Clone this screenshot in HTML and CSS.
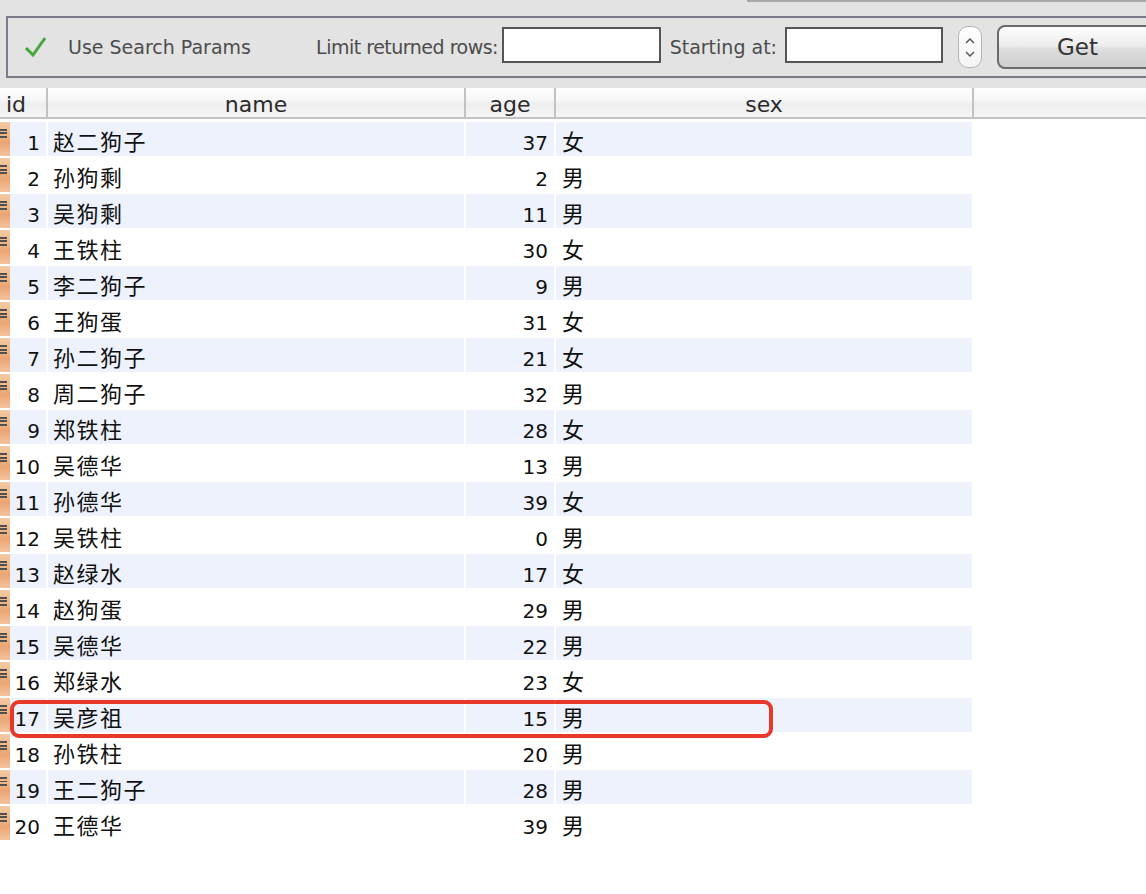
FILE: index.html
```html
<!DOCTYPE html>
<html>
<head>
<meta charset="utf-8">
<link rel="stylesheet" href="styles.css">
</head>
<body>
<div class="top">
  <div class="top-line"></div>
  <div class="toolbar">
    <svg class="check" width="22" height="22" viewBox="0 0 22 22"><path d="M2 12 L9 19 L21 2" fill="none" stroke="#45a83b" stroke-width="3" stroke-linejoin="miter"/></svg>
    <span class="opt">Use Search Params</span>
    <span class="lbl lbl1">Limit returned rows:</span>
    <span class="field f1"></span>
    <span class="lbl lbl2">Starting at:</span>
    <span class="field f2"></span>
    <span class="stepper"><svg width="20" height="40" viewBox="0 0 20 40"><path d="M6 16 L10 12 L14 16" fill="none" stroke="#555" stroke-width="1.5"/><path d="M6 25 L10 29 L14 25" fill="none" stroke="#555" stroke-width="1.5"/></svg></span>
    <span class="btn">Get</span>
  </div>
</div>
<div class="thead">
  <div class="th th-id">id</div>
  <div class="th th-name">name</div>
  <div class="th th-age">age</div>
  <div class="th th-sex">sex</div>
  <div class="th th-rest"></div>
</div>
<div class="rows">
  <div class="row alt"><span class="grip"></span><span class="c id">1</span><span class="c name">赵二狗子</span><span class="c age">37</span><span class="c sex">女</span></div>
  <div class="row"><span class="grip"></span><span class="c id">2</span><span class="c name">孙狗剩</span><span class="c age">2</span><span class="c sex">男</span></div>
  <div class="row alt"><span class="grip"></span><span class="c id">3</span><span class="c name">吴狗剩</span><span class="c age">11</span><span class="c sex">男</span></div>
  <div class="row"><span class="grip"></span><span class="c id">4</span><span class="c name">王铁柱</span><span class="c age">30</span><span class="c sex">女</span></div>
  <div class="row alt"><span class="grip"></span><span class="c id">5</span><span class="c name">李二狗子</span><span class="c age">9</span><span class="c sex">男</span></div>
  <div class="row"><span class="grip"></span><span class="c id">6</span><span class="c name">王狗蛋</span><span class="c age">31</span><span class="c sex">女</span></div>
  <div class="row alt"><span class="grip"></span><span class="c id">7</span><span class="c name">孙二狗子</span><span class="c age">21</span><span class="c sex">女</span></div>
  <div class="row"><span class="grip"></span><span class="c id">8</span><span class="c name">周二狗子</span><span class="c age">32</span><span class="c sex">男</span></div>
  <div class="row alt"><span class="grip"></span><span class="c id">9</span><span class="c name">郑铁柱</span><span class="c age">28</span><span class="c sex">女</span></div>
  <div class="row"><span class="grip"></span><span class="c id">10</span><span class="c name">吴德华</span><span class="c age">13</span><span class="c sex">男</span></div>
  <div class="row alt"><span class="grip"></span><span class="c id">11</span><span class="c name">孙德华</span><span class="c age">39</span><span class="c sex">女</span></div>
  <div class="row"><span class="grip"></span><span class="c id">12</span><span class="c name">吴铁柱</span><span class="c age">0</span><span class="c sex">男</span></div>
  <div class="row alt"><span class="grip"></span><span class="c id">13</span><span class="c name">赵绿水</span><span class="c age">17</span><span class="c sex">女</span></div>
  <div class="row"><span class="grip"></span><span class="c id">14</span><span class="c name">赵狗蛋</span><span class="c age">29</span><span class="c sex">男</span></div>
  <div class="row alt"><span class="grip"></span><span class="c id">15</span><span class="c name">吴德华</span><span class="c age">22</span><span class="c sex">男</span></div>
  <div class="row"><span class="grip"></span><span class="c id">16</span><span class="c name">郑绿水</span><span class="c age">23</span><span class="c sex">女</span></div>
  <div class="row alt marked"><span class="grip"></span><span class="c id">17</span><span class="c name">吴彦祖</span><span class="c age">15</span><span class="c sex">男</span><span class="hl"></span></div>
  <div class="row"><span class="grip"></span><span class="c id">18</span><span class="c name">孙铁柱</span><span class="c age">20</span><span class="c sex">男</span></div>
  <div class="row alt"><span class="grip"></span><span class="c id">19</span><span class="c name">王二狗子</span><span class="c age">28</span><span class="c sex">男</span></div>
  <div class="row"><span class="grip"></span><span class="c id">20</span><span class="c name">王德华</span><span class="c age">39</span><span class="c sex">男</span></div>
</div>
</body>
</html>
```
FILE: styles.css
```css
html, body {
  margin: 0;
  padding: 0;
}
body {
  width: 1146px;
  height: 894px;
  overflow: hidden;
  background: #ffffff;
  font-family: "DejaVu Sans", "Noto Sans CJK SC", sans-serif;
}
.top {
  background: #e3e3e3;
  height: 88px;
  overflow: hidden;
}
.top-line {
  height: 2px;
  margin-left: 747px;
  background: #a8a8a8;
}
.toolbar {
  margin-top: 14px;
  margin-left: 6px;
  height: 58px;
  width: 1300px;
  border: 2px solid #7b7b89;
  border-right: none;
  display: flex;
  align-items: center;
  font-size: 19px;
  color: #4c4c4c;
}
.check {
  margin-left: 16px;
  flex: none;
}
.opt {
  margin-left: 22px;
  width: 246px;
  flex: none;
  white-space: nowrap;
}
.lbl {
  flex: none;
  text-align: right;
  white-space: nowrap;
}
.lbl1 {
  width: 188px;
  padding-right: 4px;
  box-sizing: border-box;
  letter-spacing: -0.5px;
}
.lbl2 {
  width: 124px;
  padding-right: 8px;
  box-sizing: border-box;
}
.field {
  flex: none;
  height: 36px;
  background: #fff;
  border: 2px solid #555;
  box-sizing: border-box;
  margin-top: -4px;
}
.f1 { width: 159px; }
.f2 { width: 158px; }
.stepper {
  flex: none;
  margin-left: 15px;
  width: 24px;
  height: 42px;
  box-sizing: border-box;
  border: 1.5px solid #b4b4b4;
  border-radius: 10px;
  background: linear-gradient(#ffffff, #f4f4f4);
  display: flex;
  align-items: center;
  justify-content: center;
}
.btn {
  flex: none;
  margin-left: 15px;
  width: 200px;
  height: 44px;
  box-sizing: border-box;
  border: 2px solid #6a6a6a;
  border-radius: 8px;
  background: linear-gradient(#fdfdfd 0%, #eeeeee 45%, #dddddd 55%, #cfcfcf 100%);
  font-size: 23px;
  color: #333;
  display: flex;
  align-items: center;
  padding-left: 58px;
}
.thead {
  display: flex;
  height: 31px;
  box-sizing: border-box;
  border-bottom: 2px solid #c2c2c2;
  background: linear-gradient(#fefefe 0%, #f7f7f7 40%, #eeeeee 55%, #f6f6f6 100%);
}
.th {
  flex: none;
  box-sizing: border-box;
  border-right: 2px solid #c2c2c2;
  font-size: 22px;
  line-height: 29px;
  color: #2b2b2b;
  text-align: center;
  padding-top: 2px;
}
.th-id { width: 48px; text-align: left; padding-left: 6px; }
.th-name { width: 418px; }
.th-age { width: 90px; }
.th-sex { width: 418px; }
.th-rest { flex: 1; border-right: none; }
.rows {
  padding-top: 3px;
}
.row {
  display: flex;
  height: 34px;
  margin-bottom: 2px;
  font-size: 20px;
  color: #111;
}
.marked {
  position: relative;
}
.grip {
  position: relative;
  flex: none;
  width: 10px;
  height: 34px;
  background: linear-gradient(#f5cba6 0%, #eeb080 45%, #eaa574 60%, #f3c39c 100%);
}
.grip::before {
  content: "";
  position: absolute;
  left: 0;
  top: 7px;
  width: 7px;
  height: 9px;
  background: repeating-linear-gradient(#505050 0 2px, transparent 2px 3.5px);
}
.c {
  flex: none;
  height: 34px;
  box-sizing: border-box;
  margin-right: 2px;
  padding-top: 6px;
  line-height: 30px;
  white-space: nowrap;
}
.row.alt .c {
  background: #edf2fc;
}
.c.id { width: 36px; text-align: right; padding-right: 6px; }
.c.name { width: 416px; padding-left: 5px; font-size: 22px; letter-spacing: 1.5px; }
.c.age { width: 88px; text-align: right; padding-right: 6px; }
.c.sex { width: 416px; padding-left: 6px; font-size: 22px; }
.hl {
  position: absolute;
  left: 10px;
  top: 2px;
  width: 763px;
  height: 38px;
  box-sizing: border-box;
  border: 4px solid #e8382a;
  border-radius: 9px;
}
```
